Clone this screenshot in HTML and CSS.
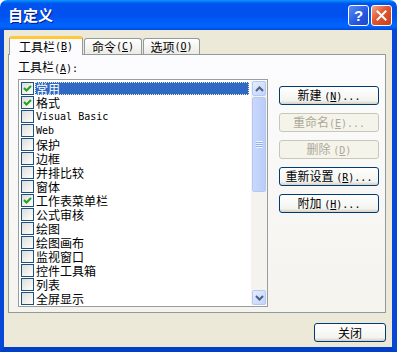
FILE: index.html
```html
<!DOCTYPE html>
<html lang="zh-CN">
<head>
    <meta charset="UTF-8">
    <title>自定义</title>
    <link rel="stylesheet" href="styles.css">
</head>
<body>
    <div class="window">
        <!-- 标题栏 -->
        <div class="titlebar">
            <span class="title">自定义</span>
            <div class="caption-btns">
                <span class="cap-btn help">?</span>
                <span class="cap-btn close">
                    <svg width="11" height="11" viewBox="0 0 11 11"><path d="M1.5 1.5 L9.5 9.5 M9.5 1.5 L1.5 9.5" stroke="#fff" stroke-width="2" stroke-linecap="square"/></svg>
                </span>
            </div>
        </div>

        <div class="client">
            <!-- 选项卡 -->
            <div class="tabs">
                <div class="tab active">工具栏 <span class="en">(<u>B</u>)</span></div>
                <div class="tab">命令 <span class="en">(<u>C</u>)</span></div>
                <div class="tab">选项 <span class="en">(<u>O</u>)</span></div>
            </div>

            <div class="panel">
                <div class="list-col">
                    <div class="label">工具栏<span class="en">(<u>A</u>):</span></div>
                    <div class="listbox">
                        <ul class="items">
                            <li class="selected"><span class="check on"></span><span class="name">常用</span></li>
                            <li><span class="check on"></span><span class="name">格式</span></li>
                            <li><span class="check"></span><span class="name en">Visual Basic</span></li>
                            <li><span class="check"></span><span class="name en">Web</span></li>
                            <li><span class="check"></span><span class="name">保护</span></li>
                            <li><span class="check"></span><span class="name">边框</span></li>
                            <li><span class="check"></span><span class="name">并排比较</span></li>
                            <li><span class="check"></span><span class="name">窗体</span></li>
                            <li><span class="check on"></span><span class="name">工作表菜单栏</span></li>
                            <li><span class="check"></span><span class="name">公式审核</span></li>
                            <li><span class="check"></span><span class="name">绘图</span></li>
                            <li><span class="check"></span><span class="name">绘图画布</span></li>
                            <li><span class="check"></span><span class="name">监视窗口</span></li>
                            <li><span class="check"></span><span class="name">控件工具箱</span></li>
                            <li><span class="check"></span><span class="name">列表</span></li>
                            <li><span class="check"></span><span class="name">全屏显示</span></li>
                        </ul>
                        <div class="scrollbar">
                            <div class="sb-btn">
                                <svg width="9" height="6" viewBox="0 0 9 6"><path d="M1 5 L4.5 1.5 L8 5" fill="none" stroke="#4D6185" stroke-width="2"/></svg>
                            </div>
                            <div class="sb-track">
                                <div class="sb-thumb"><span class="grip"></span></div>
                            </div>
                            <div class="sb-btn">
                                <svg width="9" height="6" viewBox="0 0 9 6"><path d="M1 1 L4.5 4.5 L8 1" fill="none" stroke="#4D6185" stroke-width="2"/></svg>
                            </div>
                        </div>
                    </div>
                </div>

                <!-- 右侧按钮 -->
                <div class="btn-col">
                    <button class="btn">新建 <span class="en">(<u>N</u>)...</span></button>
                    <button class="btn" disabled>重命名<span class="en">(<u>E</u>)...</span></button>
                    <button class="btn" disabled>删除 <span class="en">(<u>D</u>)</span></button>
                    <button class="btn">重新设置 <span class="en">(<u>R</u>)...</span></button>
                    <button class="btn">附加 <span class="en">(<u>H</u>)...</span></button>
                </div>
            </div>

            <div class="footer">
                <button class="btn close-btn">关闭</button>
            </div>
        </div>
    </div>
</body>
</html>
```

FILE: styles.css
```css
body {
    margin: 0;
    background: #fff;
    font-family: "Noto Sans CJK SC", sans-serif;
    font-size: 12px;
    color: #000;
}

.en {
    font-family: "DejaVu Sans Mono", monospace;
    font-size: 10px;
}

.window {
    width: 397px;
    height: 352px;
    display: flex;
    flex-direction: column;
}

/* 标题栏 */
.titlebar {
    height: 30px;
    box-sizing: border-box;
    display: flex;
    align-items: center;
    justify-content: space-between;
    padding: 0 5px 0 8px;
    border-radius: 7px 7px 0 0;
    background: linear-gradient(#0997FF 0%, #0053EE 12%, #0050EE 50%, #0066FF 88%, #0048D8 100%);
}

.title {
    color: #fff;
    font-weight: bold;
    font-size: 15px;
    line-height: 16px;
    text-shadow: 1px 1px #0A1883;
}

.caption-btns {
    display: flex;
    gap: 2px;
}

.cap-btn {
    width: 21px;
    height: 21px;
    box-sizing: border-box;
    border: 1px solid #fff;
    border-radius: 3px;
    display: flex;
    align-items: center;
    justify-content: center;
}

.help {
    background: linear-gradient(135deg, #5A8CF5, #2458E0 60%, #1C49C8);
    color: #fff;
    font-family: "Liberation Sans", sans-serif;
    font-weight: bold;
    font-size: 15px;
}

.close {
    background: linear-gradient(135deg, #F0A890, #E2552D 45%, #C8401E);
}

/* 窗口主体 */
.client {
    flex: 1;
    background: #ECE9D8;
    border-left: 4px solid #0748D8;
    border-right: 5px solid #0748D8;
    border-bottom: 5px solid #0040C8;
    padding: 6px 6px 0 4px;
}

.tabs {
    display: flex;
    align-items: flex-end;
    height: 18px;
    padding-left: 1px;
}

.tab {
    box-sizing: border-box;
    height: 16px;
    border: 1px solid #919B9C;
    border-bottom: none;
    border-radius: 3px 3px 0 0;
    background: linear-gradient(#FFFFFF, #ECEBE6);
    display: flex;
    align-items: center;
    justify-content: center;
    line-height: 14px;
    width: 58px;
    margin-left: 1px;
}

.tab:last-child {
    width: 57px;
}

.tab.active {
    position: relative;
    z-index: 1;
    width: 74px;
    height: 19px;
    margin: 0 0 -1px 0;
    background: #FCFCFE;
    border-top: 3px solid #FFC83C;
    padding-bottom: 1px;
}

.panel {
    height: 259px;
    box-sizing: border-box;
    border: 1px solid #919B9C;
    background: linear-gradient(#FCFCFE, #F4F3EE);
    display: flex;
    padding: 6px 7px 0 9px;
}

.label {
    line-height: 12px;
    height: 12px;
    margin-bottom: 6px;
}

.listbox {
    width: 250px;
    height: 228px;
    box-sizing: border-box;
    border: 1px solid #9C9C9C;
    padding: 1px 0 1px 1px;
    background: #fff;
    display: flex;
}

.items {
    list-style: none;
    margin: 0;
    padding: 0;
    width: 231px;
}

.items li {
    height: 14px;
    display: flex;
    align-items: center;
}

.check {
    width: 13px;
    height: 13px;
    box-sizing: border-box;
    margin-left: 1px;
    border: 1px solid #1C5180;
    background: linear-gradient(135deg, #DCDCD7, #FFFFFF);
}

.check.on {
    background: url("data:image/svg+xml,%3Csvg xmlns='http://www.w3.org/2000/svg' width='11' height='11'%3E%3Cpath d='M2 5 L4.5 7.5 L9 3' fill='none' stroke='%2321A121' stroke-width='2'/%3E%3C/svg%3E") center no-repeat, linear-gradient(135deg, #DCDCD7, #FFFFFF);
}

.name {
    flex: 1;
    margin: 0 2px 0 1px;
    padding-left: 1px;
    height: 13px;
    line-height: 13px;
    white-space: nowrap;
}

.name.en {
    font-size: 10px;
}

.selected .name {
    background: #316AC5;
    color: #fff;
    outline: 1px dotted #ECE9D8;
    outline-offset: -1px;
}

/* 滚动条 */
.scrollbar {
    width: 16px;
    display: flex;
    flex-direction: column;
    background: #F4F3EE;
}

.sb-btn {
    height: 15px;
    box-sizing: border-box;
    margin: 0 1px;
    border: 1px solid #B4C8F6;
    border-radius: 2px;
    background: linear-gradient(135deg, #E6EEFC, #C1D3FB);
    display: flex;
    align-items: center;
    justify-content: center;
}

.sb-track {
    flex: 1;
    padding: 1px 1px 0;
}

.sb-thumb {
    height: 95px;
    box-sizing: border-box;
    border: 1px solid #B4C8F6;
    border-radius: 2px;
    background: linear-gradient(90deg, #C9D8FC, #BACDF8);
    display: flex;
    align-items: center;
    justify-content: center;
}

.grip {
    width: 7px;
    height: 7px;
    background: repeating-linear-gradient(#EEF4FE 0 1px, #8CB0F8 1px 2px);
}

/* 按钮 */
.btn-col {
    margin-left: 11px;
    padding-top: 25px;
    display: flex;
    flex-direction: column;
    gap: 8px;
}

.btn {
    width: 100px;
    height: 19px;
    padding: 0;
    border: 1px solid #003C74;
    border-radius: 3px;
    background: linear-gradient(#FFFFFF, #F3F3EF 80%, #D6D0C5);
    font-family: "Noto Sans CJK SC", sans-serif;
    font-size: 12px;
    line-height: 15px;
    color: #000;
}

.btn:disabled {
    border-color: #C9C7BA;
    background: #F5F4EA;
    color: #ACA899;
}

.footer {
    display: flex;
    justify-content: flex-end;
    margin-top: 10px;
}

.close-btn {
    width: 72px;
}
```
